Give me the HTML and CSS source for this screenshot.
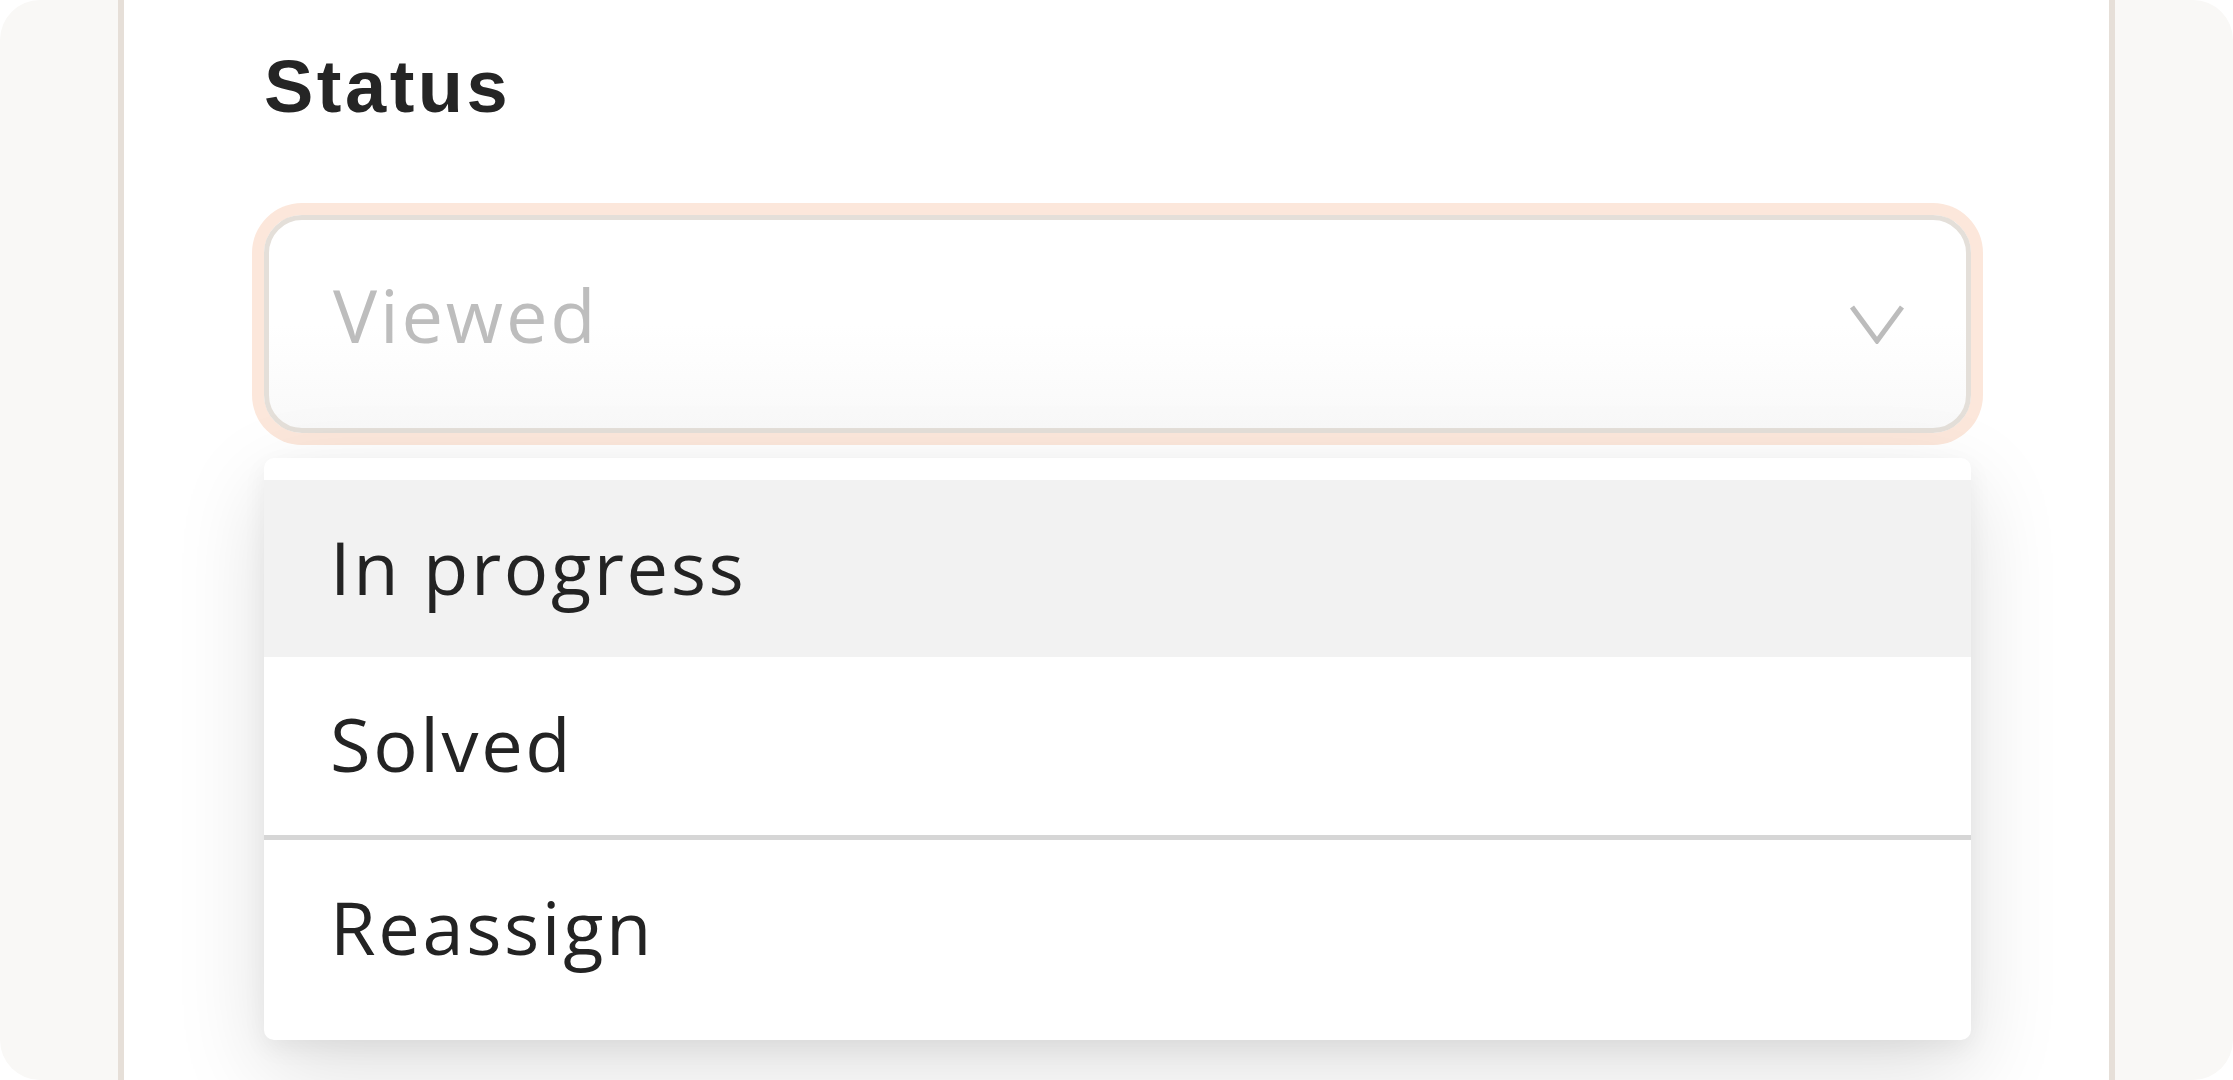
FILE: index.html
```html
<!DOCTYPE html>
<html lang="en">
<head>
<meta charset="utf-8">
<title>Status</title>
<link rel="stylesheet" href="styles.css">
</head>
<body>
<div class="frame">
  <div class="panel">
    <h2 class="label">Status</h2>
    <div class="select">
      <span class="placeholder">Viewed</span>
      <svg class="chevron" width="56" height="40" viewBox="0 0 56 40" aria-hidden="true">
        <polyline points="3,3 28,37 53,3" fill="none" stroke="#bcbcbc" stroke-width="5"/>
      </svg>
    </div>
    <ul class="menu">
      <li class="option active">In progress</li>
      <li class="option">Solved</li>
      <li class="divider"></li>
      <li class="option">Reassign</li>
    </ul>
  </div>
</div>
</body>
</html>
```
FILE: styles.css
```css
html, body {
  margin: 0;
  padding: 0;
  background: #ffffff;
}

.frame {
  width: 2233px;
  height: 1080px;
  box-sizing: border-box;
  background: #f9f8f6;
  border-radius: 40px;
  overflow: hidden;
  padding: 0 118px;
  display: flex;
}

.panel {
  flex: 1;
  position: relative;
  background: #ffffff;
  border-left: 6px solid #e6dfd8;
  border-right: 6px solid #e6dfd8;
  padding: 50px 138px 0 140px;
  display: flex;
  flex-direction: column;
}

.label {
  margin: 0;
  font-family: "Liberation Sans", Arial, sans-serif;
  font-weight: 700;
  font-size: 74px;
  line-height: 73px;
  letter-spacing: 3.5px;
  color: #252525;
}

.select {
  margin-top: 92px;
  height: 218px;
  box-sizing: border-box;
  border: 5px solid #e4dfd9;
  border-radius: 38px;
  box-shadow: 0 0 0 12px #fce7db;
  background: linear-gradient(#ffffff 0%, #ffffff 50%, #f9f9f9 100%);
  display: flex;
  align-items: center;
  justify-content: space-between;
  padding: 0 61px 0 64px;
}

.placeholder {
  font-family: "Open Sans", sans-serif;
  font-size: 74px;
  line-height: 74px;
  letter-spacing: 2.8px;
  color: #bdbdbd;
  padding-bottom: 18px;
}

.chevron {
  display: block;
  flex: none;
}

.menu {
  position: absolute;
  top: 458px;
  left: 140px;
  right: 138px;
  margin: 0;
  padding: 22px 0;
  list-style: none;
  background: #ffffff;
  border-radius: 10px;
  box-shadow: 0 30px 90px rgba(0, 0, 0, 0.13), 0 8px 24px rgba(0, 0, 0, 0.05);
  z-index: 2;
}

.option {
  height: 178px;
  display: flex;
  align-items: center;
  padding: 0 0 4px 66px;
  box-sizing: border-box;
  font-family: "Open Sans", sans-serif;
  font-size: 74px;
  line-height: 74px;
  letter-spacing: 2.6px;
  color: #232323;
}

.option.active {
  height: 177px;
  background: #f2f2f2;
}

.divider {
  height: 5px;
  background: #d6d6d6;
}
```
